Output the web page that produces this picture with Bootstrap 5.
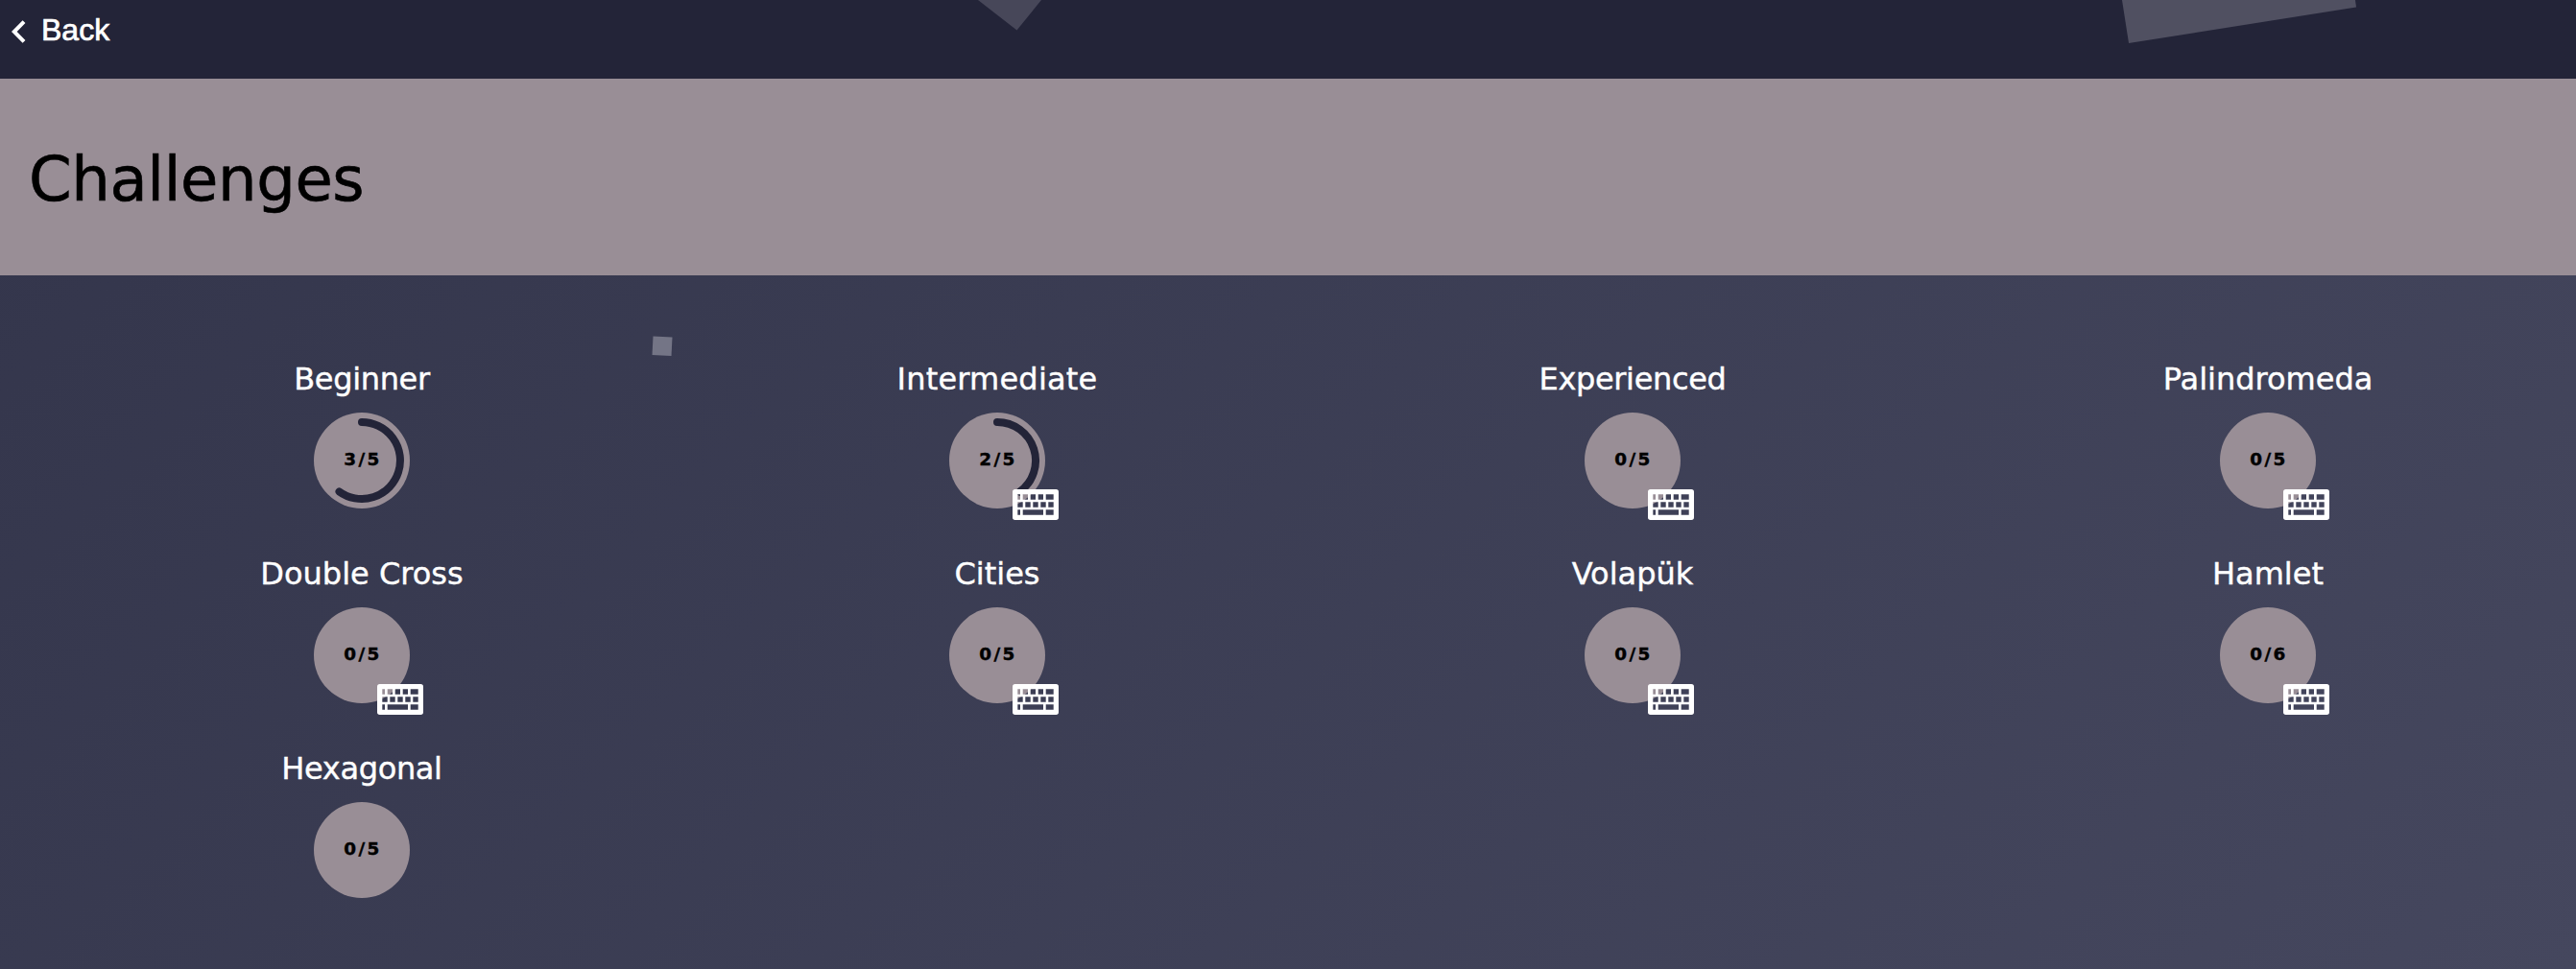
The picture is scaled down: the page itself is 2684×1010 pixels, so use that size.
<!DOCTYPE html>
<html lang="en">
<head>
<meta charset="utf-8">
<meta name="viewport" content="width=device-width, initial-scale=1">
<title>Challenges</title>
<link href="https://cdn.jsdelivr.net/npm/bootstrap@5.3.0/dist/css/bootstrap.min.css" rel="stylesheet">
<style>
body{font-family:"DejaVu Sans",sans-serif;background:linear-gradient(135deg,#33354b,#45475e);height:1010px;overflow:hidden}
.topbar{height:82px;background:#232438;padding:9px 0 0 12px}
.back-link{font:32px/44px "Liberation Sans",sans-serif;gap:16px;-webkit-text-stroke:.7px #fff}
.banner{height:205px;background:#998e96;padding:5px 0 0 30px}
.banner h1{font-size:64px;line-height:78px;letter-spacing:-.4px;-webkit-text-stroke:.6px #000}
.challenge-grid{display:grid;grid-template-columns:repeat(4,1fr);column-gap:40px;padding:88px 10px 0 66px}
.challenge{height:203px;color:#fff}
.challenge h2{font-size:32px;line-height:40px;margin:0 0 15px;white-space:nowrap;-webkit-text-stroke:.4px #fff}
.dial{width:100px;height:100px;background:#998e96}
.dial .count{font-size:18.4px;font-weight:700;color:#000;letter-spacing:2.4px;padding-left:2px;margin-top:-2px;-webkit-text-stroke:.4px #000}
.ring{fill:none;stroke:#232438;stroke-width:8;stroke-linecap:round}
.keys{left:66px;top:80px}
.floaters{pointer-events:none}
.ls-tight{letter-spacing:-.35px}
.ls-wide{letter-spacing:.2px}
</style>
<script src="https://cdn.jsdelivr.net/npm/bootstrap@5.3.0/dist/js/bootstrap.bundle.min.js"></script>
</head>
<body class="position-relative">
<svg width="0" height="0" class="position-absolute"><symbol id="keyboard" viewBox="0 0 48 32"><path fill="#fff" fill-rule="evenodd" d="M2.7 0H45.3A2.7 2.7 0 0 1 48 2.7V29.3A2.7 2.7 0 0 1 45.3 32H2.7A2.7 2.7 0 0 1 0 29.3V2.7A2.7 2.7 0 0 1 2.7 0ZM5.3 5.3V10.7H8V5.3ZM10.7 5.3V10.7H16V5.3ZM18.7 5.3V10.7H24V5.3ZM26.7 5.3V10.7H32V5.3ZM34.7 5.3V10.7H42.7V5.3ZM5.3 13.3V18.7H10.7V13.3ZM13.3 13.3V18.7H18.7V13.3ZM21.3 13.3V18.7H26.7V13.3ZM29.3 13.3V18.7H34.7V13.3ZM37.3 13.3V18.7H42.7V13.3ZM5.3 21.3V26.7H8V21.3ZM10.7 21.3V26.7H32V21.3ZM34.7 21.3V26.7H42.7V21.3Z"/></symbol></svg>
<nav class="topbar d-flex align-items-start">
  <a href="#" class="back-link d-flex align-items-center text-white text-decoration-none">
    <svg width="15" height="24" viewBox="0 0 15 24" style="margin-top:4px"><path d="M13 1.6 2.8 12 13 22.4" fill="none" stroke="#fff" stroke-width="4"/></svg>
    <span>Back</span>
  </a>
</nav>
<header class="banner d-flex align-items-center"><h1 class="m-0 fw-normal text-black">Challenges</h1></header>
<main class="challenge-grid">
  <section class="challenge d-flex flex-column align-items-center"><h2 class="fw-normal ls-tight">Beginner</h2><div class="dial rounded-circle position-relative d-flex align-items-center justify-content-center"><svg class="position-absolute top-0 start-0" width="100" height="100"><path class="ring" d="M50 10A40 40 0 1 1 26.5 82.4"/></svg><span class="count">3/5</span></div></section>
  <section class="challenge d-flex flex-column align-items-center"><h2 class="fw-normal ls-wide">Intermediate</h2><div class="dial rounded-circle position-relative d-flex align-items-center justify-content-center"><svg class="position-absolute top-0 start-0" width="100" height="100"><path class="ring" d="M50 10A40 40 0 0 1 73.5 82.4"/></svg><span class="count">2/5</span><svg class="keys position-absolute" width="48" height="32"><use href="#keyboard"/></svg></div></section>
  <section class="challenge d-flex flex-column align-items-center"><h2 class="fw-normal ls-tight">Experienced</h2><div class="dial rounded-circle position-relative d-flex align-items-center justify-content-center"><span class="count">0/5</span><svg class="keys position-absolute" width="48" height="32"><use href="#keyboard"/></svg></div></section>
  <section class="challenge d-flex flex-column align-items-center"><h2 class="fw-normal">Palindromeda</h2><div class="dial rounded-circle position-relative d-flex align-items-center justify-content-center"><span class="count">0/5</span><svg class="keys position-absolute" width="48" height="32"><use href="#keyboard"/></svg></div></section>
  <section class="challenge d-flex flex-column align-items-center"><h2 class="fw-normal">Double Cross</h2><div class="dial rounded-circle position-relative d-flex align-items-center justify-content-center"><span class="count">0/5</span><svg class="keys position-absolute" width="48" height="32"><use href="#keyboard"/></svg></div></section>
  <section class="challenge d-flex flex-column align-items-center"><h2 class="fw-normal">Cities</h2><div class="dial rounded-circle position-relative d-flex align-items-center justify-content-center"><span class="count">0/5</span><svg class="keys position-absolute" width="48" height="32"><use href="#keyboard"/></svg></div></section>
  <section class="challenge d-flex flex-column align-items-center"><h2 class="fw-normal">Volapük</h2><div class="dial rounded-circle position-relative d-flex align-items-center justify-content-center"><span class="count">0/5</span><svg class="keys position-absolute" width="48" height="32"><use href="#keyboard"/></svg></div></section>
  <section class="challenge d-flex flex-column align-items-center"><h2 class="fw-normal">Hamlet</h2><div class="dial rounded-circle position-relative d-flex align-items-center justify-content-center"><span class="count">0/6</span><svg class="keys position-absolute" width="48" height="32"><use href="#keyboard"/></svg></div></section>
  <section class="challenge d-flex flex-column align-items-center"><h2 class="fw-normal ls-tight">Hexagonal</h2><div class="dial rounded-circle position-relative d-flex align-items-center justify-content-center"><span class="count">0/5</span></div></section>
</main>
<svg class="floaters position-absolute top-0 start-0" width="2684" height="1010">
  <path fill="#474759" d="M1019 0H1085L1059.5 31.5Z"/>
  <path fill="#505061" d="M2211 0H2454L2455 7.5 2218 45Z"/>
  <path fill="#747586" d="M680.5 350.5 700.5 351.5 699.5 371 679.5 370Z"/>
</svg>
</body>
</html>
